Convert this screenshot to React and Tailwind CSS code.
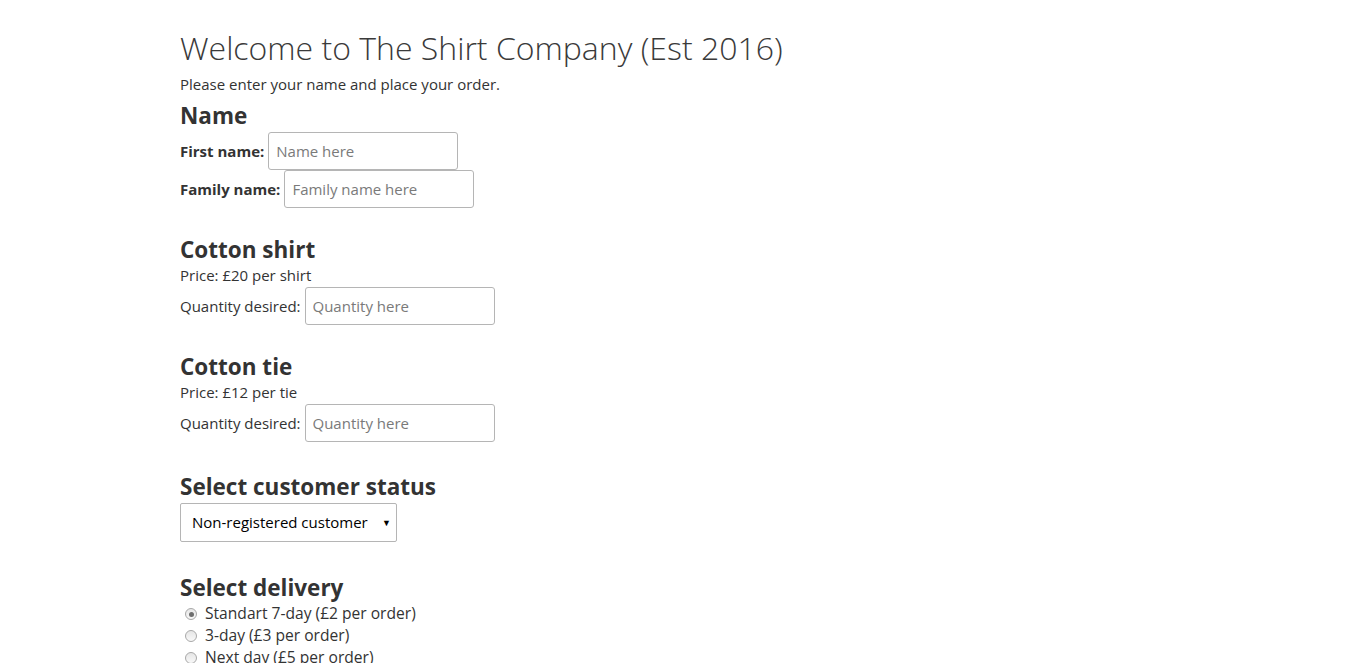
const TextBox = ({ placeholder }) => {
  return (
    <input
      type="text"
      placeholder={placeholder}
      className="w-[190px] h-[38px] border border-[#b5b5b5] rounded-[3px] pl-[7px] text-[15px] text-[#333] placeholder:text-[#7a7a7a] bg-white outline-none"
    />
  )
}

const Radio = ({ checked, label }) => {
  return (
    <div className="flex items-center h-[22px]">
      <span className="ml-[5px] w-[12px] h-[12px] rounded-full border border-[#a8a8a8] bg-gradient-to-b from-[#e6e6e6] to-[#f8f8f8] flex items-center justify-center">
        {checked && <span className="w-[5px] h-[5px] rounded-full bg-[#6e6e6e]" />}
      </span>
      <span className="ml-[8px] text-[15.6px]">{label}</span>
    </div>
  )
}

const App = () => {
  return (
    <div
      className="min-h-screen bg-white text-[#333] pl-[180px] pt-[29px] text-[15px]"
      style={{ fontFamily: "'Open Sans', sans-serif" }}
    >

      <h1 className="text-[32px] leading-[38px] font-light text-[#3a3a3a]">
        Welcome to The Shirt Company (Est 2016)
      </h1>

      <p className="mt-[7px] leading-[20px]">
        Please enter your name and place your order.
      </p>

      {/* Name */}
      <h2 className="mt-[9px] text-[22.5px] leading-[26px] font-bold">Name</h2>

      <div className="mt-[3px] flex items-center gap-[4px]">
        <span className="font-bold">First name:</span>
        <TextBox placeholder="Name here" />
      </div>

      <div className="flex items-center gap-[4px]">
        <span className="font-bold">Family name:</span>
        <TextBox placeholder="Family name here" />
      </div>

      {/* Shirt */}
      <h2 className="mt-[29px] text-[22.5px] leading-[26px] font-bold">Cotton shirt</h2>
      <p className="mt-[2px] leading-[20px]">Price: £20 per shirt</p>
      <div className="mt-[2px] flex items-center gap-[4px]">
        <span>Quantity desired:</span>
        <TextBox placeholder="Quantity here" />
      </div>

      {/* Tie */}
      <h2 className="mt-[29px] text-[22.5px] leading-[26px] font-bold">Cotton tie</h2>
      <p className="mt-[2px] leading-[20px]">Price: £12 per tie</p>
      <div className="mt-[2px] flex items-center gap-[4px]">
        <span>Quantity desired:</span>
        <TextBox placeholder="Quantity here" />
      </div>

      {/* Status */}
      <h2 className="mt-[32px] text-[22.5px] leading-[26px] font-bold">Select customer status</h2>
      <div className="mt-[3px] w-[217px] h-[39px] border border-[#b5b5b5] rounded-[2px] flex items-center justify-between pl-[11px] pr-[5px] text-black">
        <span>Non-registered customer</span>
        <span className="text-[9px]">▼</span>
      </div>

      {/* Delivery */}
      <h2 className="mt-[33px] text-[22.5px] leading-[26px] font-bold">Select delivery</h2>
      <div className="mt-[2px]">
        <Radio checked label="Standart 7-day (£2 per order)" />
        <Radio label="3-day (£3 per order)" />
        <Radio label="Next day (£5 per order)" />
      </div>

    </div>
  )
}

export default App
